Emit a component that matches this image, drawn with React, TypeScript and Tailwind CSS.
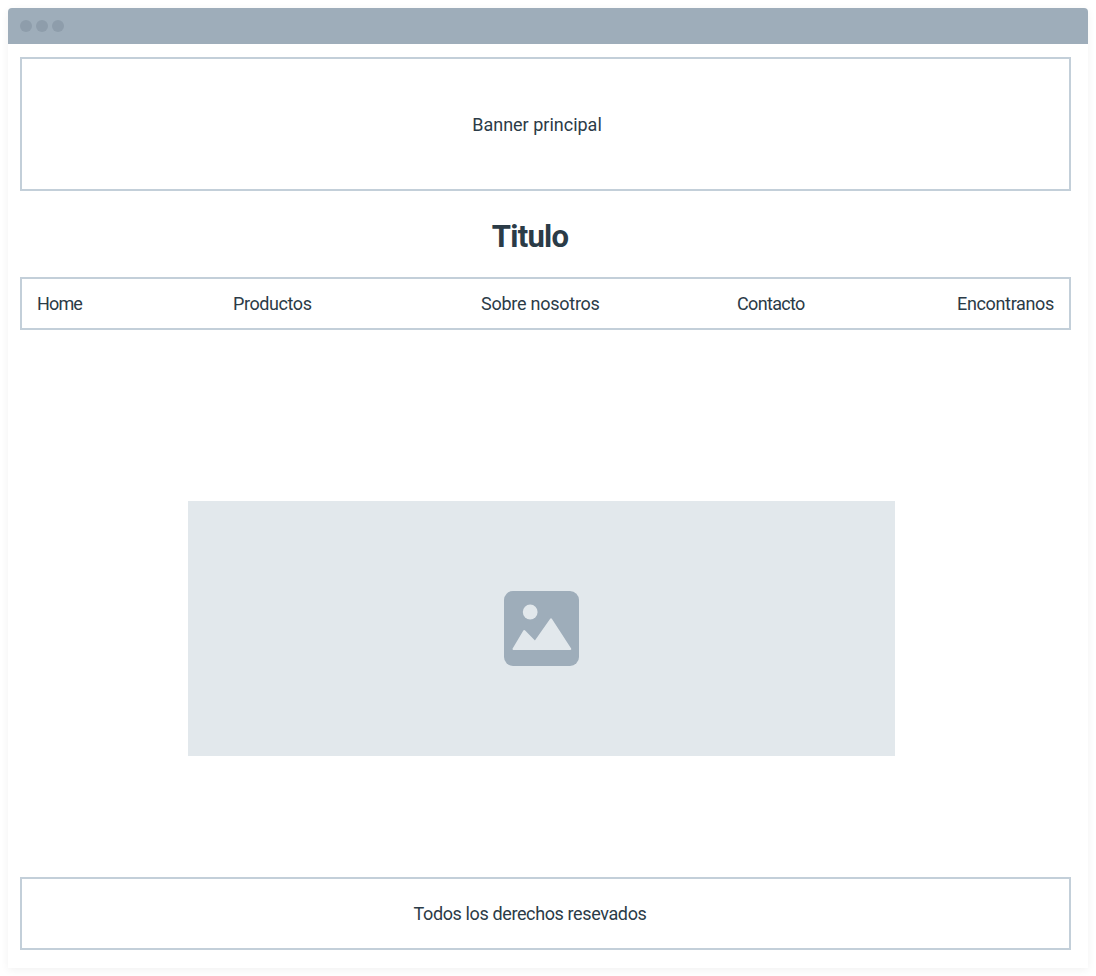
const links = [
  { label: "Home", cell: "w-[196px]", tracking: "tracking-[-0.85px]" },
  { label: "Productos", cell: "w-[248px]", tracking: "tracking-[-0.42px]" },
  { label: "Sobre nosotros", cell: "w-[256px]", tracking: "tracking-[-0.25px]" },
  { label: "Contacto", cell: "w-[220px]", tracking: "tracking-[-0.66px]" },
  { label: "Encontranos", cell: "w-[110px]", tracking: "tracking-[-0.34px]" },
];

function ImageIcon() {
  return (
    <svg width="75" height="75" viewBox="0 0 75 75" aria-hidden="true">
      <rect width="75" height="75" rx="9" fill="#9eadba" />
      <circle cx="26.2" cy="21" r="7.4" fill="#e2e8ec" />
      <path
        d="M9.5 58 L20.2 40 L31 51 L47 28.3 L66.3 58 Z"
        fill="#e2e8ec"
        stroke="#e2e8ec"
        strokeWidth="2"
        strokeLinejoin="round"
      />
    </svg>
  );
}

export default function App() {
  return (
    <div className="h-[976px] w-[1096px] overflow-hidden bg-white p-2 font-['Roboto',sans-serif] text-[18px] leading-6 text-[#2b3b47]">
      <div className="flex h-[960px] flex-col rounded-t-[4px] bg-white shadow-[0_2px_8px_rgba(0,0,0,0.06)]">
        <header className="flex h-9 shrink-0 items-center gap-1 rounded-t-[4px] bg-[#9eadba] pl-3">
          <span className="size-3 rounded-full bg-[#8e9dab]" />
          <span className="size-3 rounded-full bg-[#8e9dab]" />
          <span className="size-3 rounded-full bg-[#8e9dab]" />
        </header>
        <main className="flex grow flex-col pt-[13px] pr-[17px] pl-3 whitespace-nowrap">
          <section className="flex h-[134px] items-center justify-center border-2 border-[#c3cfd9] pt-[2px] pr-[17px]">
            <span>Banner principal</span>
          </section>
          <h1 className="flex h-[86px] items-center justify-center pt-[5px] pr-[31px] text-[31px] leading-9 font-bold tracking-[-0.75px]">
            Titulo
          </h1>
          <nav className="flex h-[53px] items-center border-2 border-[#c3cfd9] pl-[15px]">
            {links.map((l) => (
              <a key={l.label} className={`${l.cell} ${l.tracking}`}>
                {l.label}
              </a>
            ))}
          </nav>
          <div className="mt-[171px] ml-[168px] flex h-[255px] w-[707px] items-center justify-center bg-[#e2e8ec]">
            <ImageIcon />
          </div>
          <footer className="mt-[121px] flex h-[73px] items-center justify-center border-2 border-[#c3cfd9] pr-[31px]">
            <span className="tracking-[-0.38px]">Todos los derechos resevados</span>
          </footer>
        </main>
      </div>
    </div>
  );
}
